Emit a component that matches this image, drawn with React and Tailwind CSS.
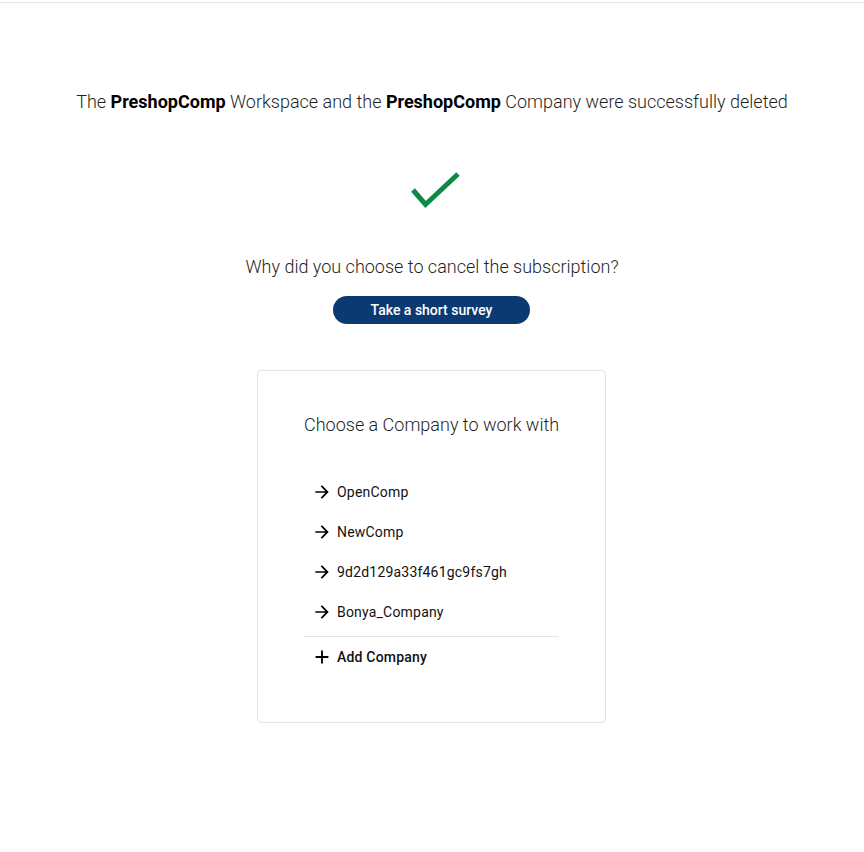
import React from "react";
import { MdArrowForward, MdAdd } from "react-icons/md";

const companies = ["OpenComp", "NewComp", "9d2d129a33f461gc9fs7gh", "Bonya_Company"];

export default function App() {
  return (
    <div className="min-h-[852px] bg-white pt-[2px] text-[#212121]" style={{ fontFamily: "Roboto, 'Noto Sans', sans-serif" }}>
      <div className="border-t border-[#e6e6e6]" />
      <div className="flex flex-col items-center pt-[85px]">
        <p className="text-[18px] leading-[28px] font-light text-[#1f1f1f]">
          The <span className="font-bold text-black">PreshopComp</span> Workspace and the{" "}
          <span className="font-bold text-black">PreshopComp</span> Company were successfully deleted
        </p>
        <svg className="mt-[55px] ml-[8px]" width="52" height="42" viewBox="0 0 52 42">
          <path d="M3 19 L15.5 33.5 L48 3" fill="none" stroke="#0d8a42" strokeWidth="5" />
        </svg>
        <p className="mt-[40px] text-[18px] leading-[28px] font-light text-[#1f1f1f]">
          Why did you choose to cancel the subscription?
        </p>
        <button className="mt-[15px] mr-[1px] h-[28px] w-[197px] rounded-full bg-[#0b3a73] text-[14px] font-medium text-white">
          Take a short survey
        </button>
        <div className="mt-[46px] mr-[1px] w-[349px] rounded-[4px] border border-[#e3e3e3] px-[46px] pt-[40px] pb-[45px]">
          <h2 className="whitespace-nowrap text-center text-[18px] leading-[28px] font-light text-[#1f1f1f]">
            Choose a Company to work with
          </h2>
          <ul className="mt-[33px]">
            {companies.map((c) => (
              <li key={c} className="flex h-[40px] items-center gap-[5px] pl-[8px] text-[14px] tracking-[0.2px] text-[#111]">
                <MdArrowForward size={20} className="text-black" />
                <span>{c}</span>
              </li>
            ))}
          </ul>
          <div className="mt-[4px] border-t border-[#e3e3e3]" />
          <div className="flex h-[40px] items-center gap-[4px] pl-[7px] text-[14px] font-medium tracking-[0.2px] text-[#111]">
            <MdAdd size={22} className="text-black" />
            <span>Add Company</span>
          </div>
        </div>
      </div>
    </div>
  );
}
